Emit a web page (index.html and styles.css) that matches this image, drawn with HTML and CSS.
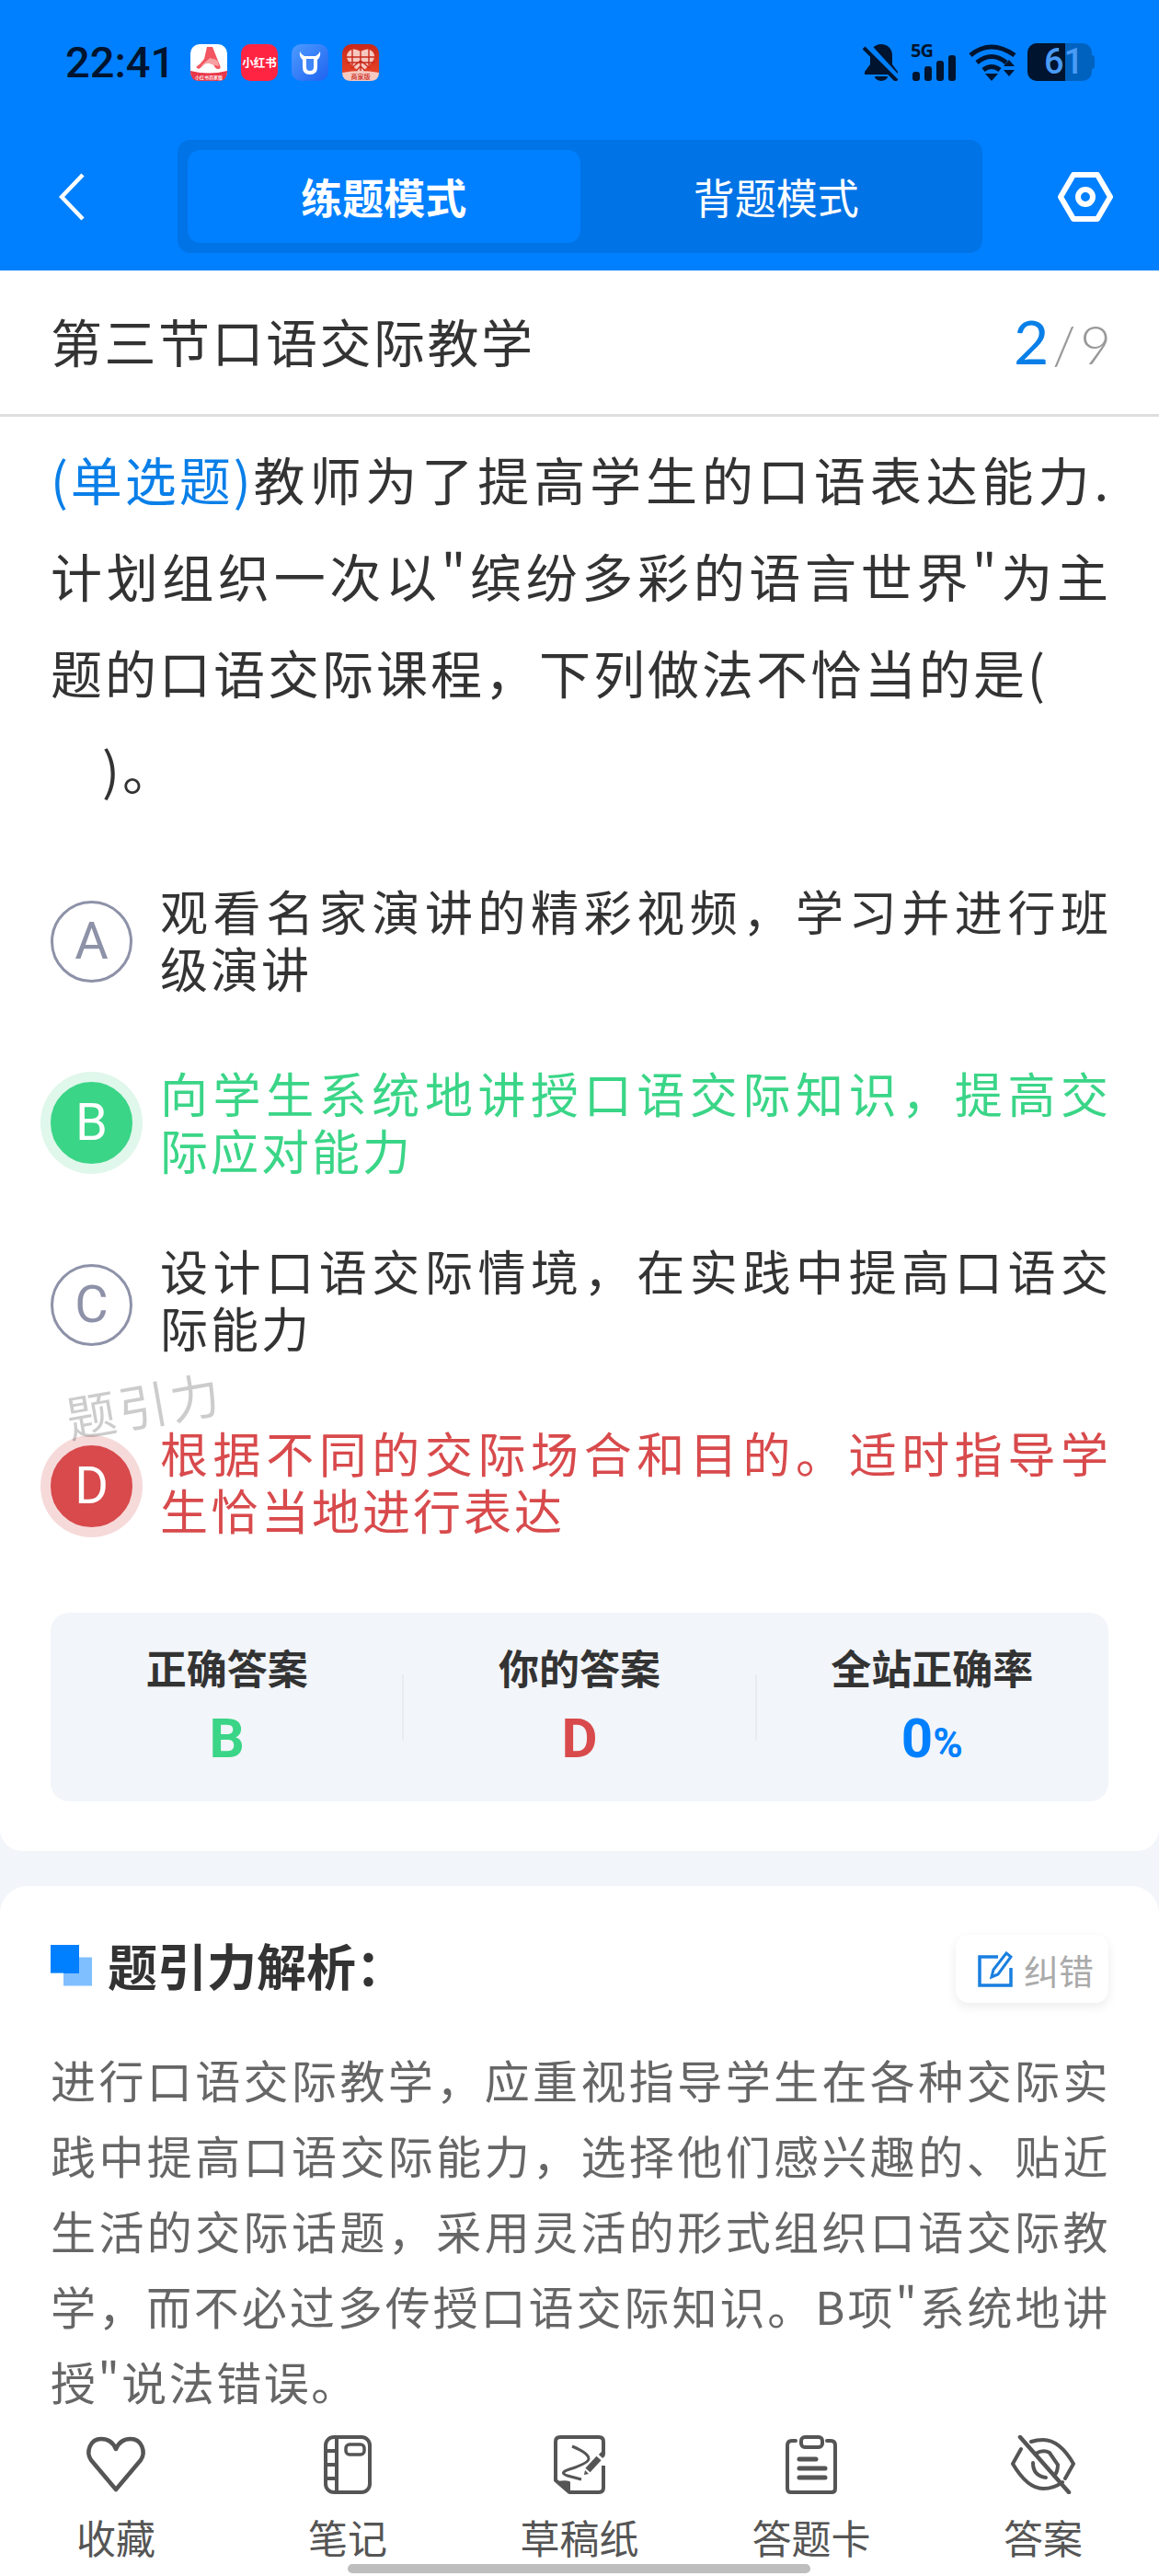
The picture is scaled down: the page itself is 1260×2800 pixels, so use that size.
FILE: index.html
```html
<!DOCTYPE html>
<html lang="zh-CN">
 <head>
  <meta charset="utf-8">
  <title>练题模式</title>
  <link rel="stylesheet" href="styles.css">
 </head>
 <body>
  <div class="page">
   <header class="top">
    <div class="status">
     <span class="time">22:41</span>
     <div class="apps">
      <svg class="app" viewBox="0 0 40 40"><rect width="40" height="40" rx="10" fill="#fff"/><path d="M0 29q20 5 40 0v1q0 10-10 10H10Q0 40 0 30z" fill="#e8374a"/><path d="M18 3h6l8 20q2 4-2 4-3 0-5-5l-3-7-6 6q-4 4-7 6l-3-2q5-3 9-9z" fill="#f2555f"/><path d="M20 16q7-1 10 3l1 5-8-2q-5-3-9 1l-3 1z" fill="#f7a0a4"/><text x="20" y="38" class="app-tiny" fill="#fff">小红书商家版</text></svg>
      <svg class="app" viewBox="0 0 40 40"><rect width="40" height="40" rx="10" fill="#ff2442"/><text x="20" y="24.5" class="app-label" fill="#fff">小红书</text></svg>
      <svg class="app" viewBox="0 0 40 40"><defs><linearGradient id="cow" x1="0" y1="0" x2="1" y2="1"><stop offset="0" stop-color="#4d9bff"/><stop offset="1" stop-color="#1f63f0"/></linearGradient></defs><rect width="40" height="40" rx="10" fill="url(#cow)"/><path d="M9 8q2 4 5 5h12q3-1 5-5 1 6-3 9v8q0 8-8 8t-8-8v-8q-4-3-3-9z" fill="#fff"/><path d="M16 16h8v9q0 4-4 4t-4-4z" fill="#3f86f8"/></svg>
      <svg class="app" viewBox="0 0 40 40"><defs><linearGradient id="pdd" x1="0" y1="0" x2="0" y2="1"><stop offset="0" stop-color="#c9281a"/><stop offset="1" stop-color="#ee4a2a"/></linearGradient></defs><rect width="40" height="40" rx="10" fill="url(#pdd)"/><path d="M20 32 7 19q-4-6 0-11 5-5 13 0 8-5 13 0 4 5 0 11z" fill="#f6c9c0"/><path d="M20 8v24M11 6v17M29 6v17M5 14h30M5 20h30M10 26l10-8 10 8M14 30l6-6 6 6" stroke="#c9281a" stroke-width="1.400" fill="none"/><path d="M0 31q20-4 40 0 0 9-10 9H10Q0 40 0 31z" fill="#f6c9c0"/><text x="20" y="38" class="app-small" fill="#c9281a">商家版</text></svg>
     </div>
     <div class="sys">
      <svg class="bell" viewBox="0 0 40 41"><path d="M20 1c-7 0-12 5-12 12v10l-6 8v3h36v-3l-6-8V13c0-7-5-12-12-12z" fill="#00142f"/><path d="M13 36a7 5 0 0 0 14 0z" fill="#00142f"/><path d="M4 2l33 36" stroke="#0080ff" stroke-width="8"/><path d="M1 5l36 36" stroke="#00142f" stroke-width="4"/></svg>
      <div class="net">
       <span class="net-label">5G</span>
       <svg class="bars" viewBox="0 0 48 28"><rect x="0" y="18" width="8" height="10" rx="3"/><rect x="13" y="12" width="8" height="16" rx="3"/><rect x="26" y="6" width="8" height="22" rx="3"/><rect x="39" y="0" width="8" height="28" rx="3"/></svg>
      </div>
      <svg class="wifi" viewBox="0 0 52 41"><path d="M2 13Q24-5 50 13" stroke="#00142f" stroke-width="5" fill="none"/><path d="M9 21q16-13 32 0" stroke="#00142f" stroke-width="5" fill="none"/><path d="M16 29q9-7 18 0" stroke="#00142f" stroke-width="5" fill="none"/><path d="M18 33h14l-7 8zM38 25l6-7 6 7zM38 29l6 7 6-7z" fill="#00142f"/></svg>
      <div class="battery"><span class="battery-fill"></span><span class="battery-num">61</span></div>
     </div>
    </div>
    <nav class="bar">
     <svg class="back" viewBox="0 0 28 52"><path d="M26 2 3 26l23 24" fill="none" stroke="#fff" stroke-width="4.500"/></svg>
     <div class="modes">
      <span class="mode on">练题模式</span>
      <span class="mode">背题模式</span>
     </div>
     <svg class="gear" viewBox="0 0 60 54"><path d="M17 3h26l14 24-14 24H17L3 27z" fill="none" stroke="#fff" stroke-width="6" stroke-linejoin="round"/><circle cx="30" cy="27" r="8" fill="none" stroke="#fff" stroke-width="6"/></svg>
    </nav>
   </header>

   <main class="scroll">
    <section class="card first">
     <div class="head">
      <h1 class="head-title">第三节口语交际教学</h1>
      <div class="count"><b>2</b><i>/</i><span>9</span></div>
     </div>
     <p class="q"><span class="q-type">(单选题)</span>教师为了提高学生的口语表达能力.计划组织一次以"缤纷多彩的语言世界"为主题的口语交际课程，下列做法不恰当的是(<br><span class="q-blank"></span>)。</p>
     <div class="opts">
      <div class="opt"><span class="dot">A</span><p class="opt-text">观看名家演讲的精彩视频，学习并进行班级演讲</p></div>
      <div class="opt ok"><span class="dot">B</span><p class="opt-text">向学生系统地讲授口语交际知识，提高交际应对能力</p></div>
      <div class="opt up"><span class="dot">C</span><p class="opt-text">设计口语交际情境，在实践中提高口语交际能力</p></div>
      <div class="opt up bad"><span class="dot">D</span><p class="opt-text">根据不同的交际场合和目的。适时指导学生恰当地进行表达</p></div>
     </div>
     <div class="stats">
      <div class="stat"><div class="stat-name">正确答案</div><div class="stat-val green">B</div></div>
      <div class="stat"><div class="stat-name">你的答案</div><div class="stat-val red">D</div></div>
      <div class="stat"><div class="stat-name">全站正确率</div><div class="stat-val blue">0<small>%</small></div></div>
     </div>
     <div class="mark">题引力</div>
    </section>

    <section class="card second">
     <div class="sub">
      <h2 class="sub-title"><span class="squares"></span>题引力解析：</h2>
      <div class="fix">
       <svg class="fix-icon" viewBox="0 0 38 39"><path d="M22 6H2v31h34V18" fill="none" stroke="#1a7fe0" stroke-width="3.500"/><path d="M31 2l5 4-14 19-7 3 2-8z" fill="none" stroke="#1a7fe0" stroke-width="3"/></svg>
       <span>纠错</span>
      </div>
     </div>
     <p class="expl">进行口语交际教学，应重视指导学生在各种交际实践中提高口语交际能力，选择他们感兴趣的、贴近生活的交际话题，采用灵活的形式组织口语交际教学，而不必过多传授口语交际知识。B项"系统地讲授"说法错误。</p>
    </section>
   </main>

   <footer class="tabs">
    <div class="tab">
     <svg class="tab-icon" viewBox="0 0 70 64"><path d="M35 59 8 27C2 18 7 4 19 4c8 0 13 4 16 11 3-7 8-11 16-11 12 0 17 14 11 23z" fill="none" stroke="#555" stroke-width="4.500" stroke-linejoin="round"/></svg>
     <span>收藏</span>
    </div>
    <div class="tab">
     <svg class="tab-icon" viewBox="0 0 70 64"><rect x="11" y="2" width="48" height="60" rx="9" fill="none" stroke="#555" stroke-width="4"/><path d="M23 2v60M11 17h12M11 32h12M11 47h12" stroke="#555" stroke-width="4"/><rect x="33" y="10" width="20" height="11" rx="4" fill="none" stroke="#555" stroke-width="3.500"/></svg>
     <span>笔记</span>
    </div>
    <div class="tab">
     <svg class="tab-icon" viewBox="0 0 70 64"><path d="M61 21V7q0-5-5-5H14q-5 0-5 5v42l15 13h32q5 0 5-5V33" fill="none" stroke="#555" stroke-width="4" stroke-linejoin="round"/><path d="M10 50q14-2 15 1v11z" fill="#555"/><path d="M27 12q17 7 18 13 1 5-21 12-12 4-2 7l15 4" fill="none" stroke="#555" stroke-width="3"/><path d="M44 38l12-13" stroke="#555" stroke-width="7"/><path d="M40 43l1-5 4 4z" fill="#555"/><path d="M58 23l3-3" stroke="#555" stroke-width="6"/></svg>
     <span>草稿纸</span>
    </div>
    <div class="tab">
     <svg class="tab-icon" viewBox="0 0 70 64"><path d="M18 6h-4q-5 0-5 5v47q0 4 4 4h44q4 0 4-4V11q0-5-5-5h-4" fill="none" stroke="#555" stroke-width="4" stroke-linecap="round"/><rect x="24" y="2" width="23" height="11" rx="4" fill="none" stroke="#555" stroke-width="4"/><path d="M22 26h18M22 36h28M22 46h28" stroke="#555" stroke-width="5" stroke-linecap="round"/></svg>
     <span>答题卡</span>
    </div>
    <div class="tab">
     <svg class="tab-icon" viewBox="0 0 70 64"><path d="M11 15 2 31q16 27 33 27 12 0 21-7M22 7q6-2 13-2 18 0 33 26l-9 16" fill="none" stroke="#555" stroke-width="4" stroke-linecap="round"/><path d="M27 20q8-5 15-1l9 13q0 8-4 12M24 30q0 14 14 16" fill="none" stroke="#555" stroke-width="4" stroke-linecap="round"/><path d="M10 2l53 60" stroke="#555" stroke-width="4.500" stroke-linecap="round"/></svg>
     <span>答案</span>
    </div>
    <span class="home"></span>
   </footer>
  </div>
 </body>
</html>
```

FILE: styles.css
```css
* { box-sizing: border-box; }
html, body { margin: 0; padding: 0; }
body {
 font-family: "Noto Sans CJK SC", "Noto Sans", sans-serif;
 background: #f2f5f9;
 color: #333;
}
h1, h2, p { margin: 0; font-weight: inherit; }

.page {
 width: 1260px;
 height: 2800px;
 display: flex;
 flex-direction: column;
 overflow: hidden;
 position: relative;
}

/* blue header */
.top { background: #0080ff; height: 294px; flex: none; padding-top: 47px; }
.status { display: flex; align-items: center; height: 41px; padding: 0 73px 0 71px; }
.time { font: 500 47px/41px Roboto, sans-serif; color: #00142f; width: 136px; }
.apps { display: flex; gap: 15px; }
.app { width: 40px; height: 40px; display: block; }
.app-label { font: 700 12.500px "Noto Sans CJK SC", sans-serif; text-anchor: middle; }
.app-small { font: 500 7px "Noto Sans CJK SC", sans-serif; text-anchor: middle; }
.app-tiny { font: 500 5px "Noto Sans CJK SC", sans-serif; text-anchor: middle; }
.sys { margin-left: auto; display: flex; align-items: center; }
.bell { width: 40px; height: 41px; display: block; margin-right: 12px; }
.net { width: 50px; height: 41px; display: flex; flex-direction: column; margin-right: 13px; }
.net-label { font: 700 20px/16px "Open Sans", sans-serif; color: #00142f; height: 13px; letter-spacing: -1px; }
.bars { width: 48px; height: 28px; margin-left: 2px; fill: #00142f; }
.wifi { width: 52px; height: 41px; display: block; margin-right: 12px; }
.battery { width: 70px; height: 41px; background: #0062bf; border-radius: 10px; position: relative; }
.battery::after { content: ""; position: absolute; right: -3px; top: 13px; width: 3px; height: 15px; background: #0062bf; border-radius: 0 3px 3px 0; }
.battery-fill { display: block; width: 41px; height: 41px; background: #00142f; border-radius: 10px 0 0 10px; }
.battery-num { position: absolute; left: 18px; top: 0; font: 500 38px/41px Roboto, sans-serif; color: #4a9bf5; }

.bar { display: flex; align-items: center; height: 123px; margin-top: 64px; padding-left: 64px; }
.back { width: 28px; height: 52px; display: block; margin-right: 101px; }
.modes { width: 875px; height: 123px; background: #0073e6; border-radius: 14px; padding: 11px; display: grid; grid-template-columns: 1fr 1fr; }
.mode { display: flex; align-items: center; justify-content: center; font-size: 45px; color: #fff; border-radius: 14px; }
.mode.on { background: #0080ff; font-weight: 700; }
.gear { width: 60px; height: 54px; display: block; margin-left: 82px; }

/* content */
.scroll { flex: 1; min-height: 0; overflow: hidden; }
.card { background: #fff; position: relative; }
.first { border-radius: 0 0 24px 24px; padding-bottom: 54px; }
.second { border-radius: 30px 30px 0 0; margin-top: 38px; padding: 53px 55px 40px; }

.head { height: 159px; border-bottom: 3px solid #dcdee0; display: flex; align-items: center; justify-content: space-between; padding: 0 52px 4px 55px; }
.head-title { font-size: 56px; letter-spacing: 2.500px; line-height: 70px; }
.count { display: flex; align-items: baseline; font-family: Lato, sans-serif; font-weight: 300; color: #999; font-size: 58px; }
.count b { font-weight: 400; font-size: 66px; color: #0a7fe8; }
.count i { font-style: normal; margin: 0 5px 0 4px; }

.q { padding: 14px 52px 0 55px; font-size: 56px; letter-spacing: 3px; line-height: 105px; text-align: justify; }
.q-type { color: #0a7fe8; letter-spacing: 1px; }
.q-blank { display: inline-block; width: 56px; }

.opts { display: flex; flex-direction: column; gap: 69.500px; padding: 72px 52px 0 55px; }
.opt { display: flex; align-items: center; gap: 30px; }
.opt-text { flex: 1; font-size: 52px; letter-spacing: 3px; line-height: 62px; margin-bottom: 4px; text-align: justify; }
.up .opt-text { margin: -4px 0 8px; }
.dot { flex: none; width: 89px; height: 89px; border-radius: 50%; border: 3px solid #8e92a8; color: #8e92a8; font: 400 56px/83px Roboto, sans-serif; text-align: center; }
.ok .opt-text { color: #3ad587; }
.ok .dot { background: #3ad587; border-color: #3ad587; color: #fff; box-shadow: 0 0 0 11px #e0f7eb; }
.bad .opt-text { color: #d84a4c; }
.bad .dot { background: #d84a4c; border-color: #d84a4c; color: #fff; box-shadow: 0 0 0 11px #f6dada; }

.stats { margin: 73.500px 55px 0; height: 205px; background: #f2f5f9; border-radius: 20px; display: grid; grid-template-columns: repeat(3, 1fr); padding-top: 29px; }
.stat { text-align: center; position: relative; }
.stat + .stat::before { content: ""; position: absolute; left: -1px; top: 38px; width: 2px; height: 72px; background: #e8ebef; }
.stat-name { font-size: 44px; font-weight: 700; line-height: 60px; }
.stat-val { font: 700 60px/84px Roboto, sans-serif; margin-top: 6px; }
.stat-val small { font-size: 44px; }
.green { color: #3ad587; }
.red { color: #d84a4c; }
.blue { color: #0080ff; }

.mark { position: absolute; left: 71px; top: 1196px; font-size: 54px; letter-spacing: 3px; line-height: 72px; color: rgba(0, 0, 0, .2); transform: rotate(-10deg); }

.sub { display: flex; align-items: center; justify-content: space-between; }
.sub-title { display: flex; align-items: center; font-size: 54px; font-weight: 700; line-height: 66px; margin-bottom: 8px; }
.squares { width: 45px; height: 45px; margin-right: 17px; position: relative; background: #80bfff; clip-path: polygon(0 0, 31px 0, 31px 14px, 45px 14px, 45px 45px, 14px 45px, 14px 31px, 0 31px); }
.squares::before { content: ""; position: absolute; left: 0; top: 0; width: 31px; height: 31px; background: #0080ff; }
.fix { width: 166px; height: 74px; border-radius: 14px; background: #fff; box-shadow: 0 4px 12px rgba(0, 0, 0, .08); display: flex; align-items: center; padding-left: 24px; gap: 12px; color: #aaa; font-size: 38px; }
.fix-icon { width: 38px; height: 39px; display: block; }
.expl { margin-top: 42px; margin-right: -2px; font-size: 49px; letter-spacing: 2.500px; line-height: 82px; color: #666; text-align: justify; }

/* bottom tabs */
.tabs { flex: none; height: 160px; background: #fff; display: grid; grid-template-columns: repeat(5, 1fr); padding-top: 7px; position: relative; }
.tab { display: flex; flex-direction: column; align-items: center; color: #555; font-size: 43px; line-height: 50px; }
.tab-icon { width: 70px; height: 64px; display: block; margin-bottom: 21px; }
.home { position: absolute; left: 378px; bottom: 3px; width: 503px; height: 10px; border-radius: 5px; background: #bebebe; }
```
